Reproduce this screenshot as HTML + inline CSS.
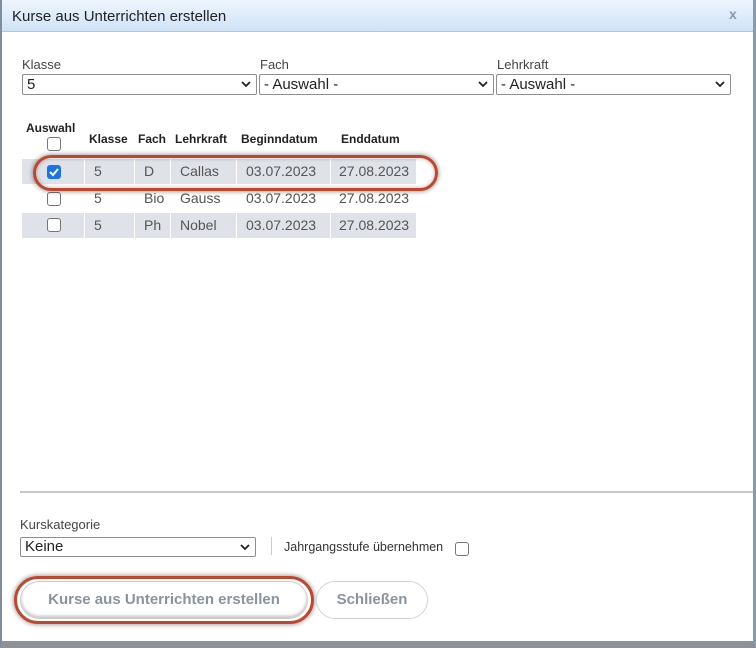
<!DOCTYPE html>
<html><head><meta charset="utf-8"><style>
*{box-sizing:border-box;margin:0;padding:0}
body{width:756px;height:648px;overflow:hidden;background:#fff;font-family:"Liberation Sans",sans-serif;position:relative}
.a{position:absolute}
.sel{position:absolute;height:21px;border:1px solid #8e8e8e;border-radius:2px;background:#fff;font-size:15px;color:#222;padding-left:4px;line-height:19px}
.sel svg{position:absolute;right:5px;top:6px}
.lbl{position:absolute;font-size:13px;color:#444}
.cell{position:absolute;height:25px;line-height:25px;font-size:14px;color:#555;padding-left:9px}
.g{background:#dfe2e8}
.th{position:absolute;font-size:12px;font-weight:bold;color:#222}
.cb{position:absolute;width:14px;height:14px;border:1px solid #767676;border-radius:3px;background:#fff}
</style></head><body>
<div class="a" style="left:0;top:0;width:756px;height:648px;border-left:2px solid #7e8e9e;border-right:3px solid #8a9aab;border-bottom:7px solid #8e9298"></div>
<div class="a" style="left:2px;top:0;width:751px;height:32px;background:linear-gradient(#eef5fd,#cfe3f8);border-bottom:1px solid #b4c6da"></div>
<div class="a" style="left:12px;top:8px;font-size:15px;color:#222">Kurse aus Unterrichten erstellen</div>
<div class="a" style="left:729px;top:6px;font-size:14px;font-weight:bold;color:#8a9aab">x</div>

<div class="lbl" style="left:22px;top:57px">Klasse</div>
<div class="lbl" style="left:260px;top:57px">Fach</div>
<div class="lbl" style="left:497px;top:57px">Lehrkraft</div>
<div class="sel" style="left:22px;top:74px;width:235px">5<svg width="10" height="7"><path d="M1 1l4 4 4-4" stroke="#222" stroke-width="1.8" fill="none"/></svg></div>
<div class="sel" style="left:259px;top:74px;width:235px">- Auswahl -<svg width="10" height="7"><path d="M1 1l4 4 4-4" stroke="#222" stroke-width="1.8" fill="none"/></svg></div>
<div class="sel" style="left:496px;top:74px;width:235px">- Auswahl -<svg width="10" height="7"><path d="M1 1l4 4 4-4" stroke="#222" stroke-width="1.8" fill="none"/></svg></div>

<div class="th" style="left:26px;top:121px">Auswahl</div>
<div class="cb" style="left:47px;top:137px"></div>
<div class="th" style="left:89px;top:132px">Klasse</div>
<div class="th" style="left:138px;top:132px">Fach</div>
<div class="th" style="left:175px;top:132px">Lehrkraft</div>
<div class="th" style="left:241px;top:132px">Beginndatum</div>
<div class="th" style="left:341px;top:132px">Enddatum</div>

<div class="cell g" style="left:22px;top:159px;width:62px"></div>
<div class="cell g" style="left:85px;top:159px;width:49px">5</div>
<div class="cell g" style="left:135px;top:159px;width:35px">D</div>
<div class="cell g" style="left:171px;top:159px;width:65px">Callas</div>
<div class="cell g" style="left:237px;top:159px;width:93px">03.07.2023</div>
<div class="cell g" style="left:331px;top:159px;width:85px;padding-left:8px">27.08.2023</div>
<div class="a" style="left:47px;top:165px;width:14px;height:14px;border-radius:3px;background:#1a73e8"><svg width="14" height="14"><path d="M3 7l3 3 5-6" stroke="#fff" stroke-width="2" fill="none"/></svg></div>

<div class="cell" style="left:22px;top:186px;width:62px"></div>
<div class="cb" style="left:47px;top:192px"></div>
<div class="cell" style="left:85px;top:186px">5</div>
<div class="cell" style="left:135px;top:186px">Bio</div>
<div class="cell" style="left:171px;top:186px">Gauss</div>
<div class="cell" style="left:237px;top:186px">03.07.2023</div>
<div class="cell" style="left:331px;top:186px;padding-left:8px">27.08.2023</div>

<div class="cell g" style="left:22px;top:213px;width:62px"></div>
<div class="cb" style="left:47px;top:218px"></div>
<div class="cell g" style="left:85px;top:213px;width:49px">5</div>
<div class="cell g" style="left:135px;top:213px;width:35px">Ph</div>
<div class="cell g" style="left:171px;top:213px;width:65px">Nobel</div>
<div class="cell g" style="left:237px;top:213px;width:93px">03.07.2023</div>
<div class="cell g" style="left:331px;top:213px;width:85px;padding-left:8px">27.08.2023</div>

<div class="a" style="left:33px;top:155px;width:405px;height:36px;border:3px solid #c0462e;border-radius:18px;box-shadow:0 0 4px 1px rgba(0,0,0,.35),inset 0 0 4px rgba(0,0,0,.3)"></div>

<div class="a" style="left:20px;top:491px;width:733px;height:2px;background:#c8c8c8"></div>
<div class="lbl" style="left:20px;top:517px">Kurskategorie</div>
<div class="sel" style="left:20px;top:537px;width:236px;height:20px;line-height:18px">Keine<svg width="10" height="7"><path d="M1 1l4 4 4-4" stroke="#222" stroke-width="1.8" fill="none"/></svg></div>
<div class="a" style="left:271px;top:537px;width:1px;height:18px;background:#ccc"></div>
<div class="a" style="left:284px;top:540px;font-size:12.5px;color:#333">Jahrgangsstufe übernehmen</div>
<div class="cb" style="left:455px;top:542px"></div>

<div class="a" style="left:14px;top:576px;width:300px;height:48px;border:3px solid #c0462e;border-radius:24px;box-shadow:0 0 4px 1px rgba(0,0,0,.35)"></div>
<div class="a" style="left:20px;top:581px;width:288px;height:38px;border:1px solid #ccc;border-radius:19px;background:#fff;box-shadow:inset 0 -2px 3px rgba(0,0,0,.25);text-align:center;line-height:36px;font-size:15px;font-weight:bold;color:#8a949e">Kurse aus Unterrichten erstellen</div>
<div class="a" style="left:316px;top:581px;width:112px;height:38px;border:1px solid #d0d4d8;border-radius:19px;background:#fff;text-align:center;line-height:36px;font-size:15px;font-weight:bold;color:#8a949e">Schließen</div>
</body></html>
